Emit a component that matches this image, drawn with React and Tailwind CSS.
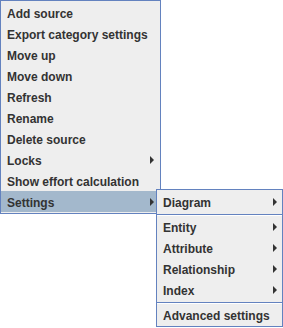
import React from "react";

const Arrow = () => (
  <svg width="4" height="8" viewBox="0 0 4 8" className="block">
    <polygon points="0,0 4,4 0,8" fill="#333333" />
  </svg>
);

const Item = ({ label, arrow, selected, arrowPad = "pr-[6px]" }) => (
  <div
    className={`flex items-center justify-between h-[21px] pl-[6px] ${arrowPad} ${
      selected ? "bg-[#A3B8CC]" : ""
    }`}
  >
    <span className="pt-[3px] leading-[18px] whitespace-nowrap">{label}</span>
    {arrow && <Arrow />}
  </div>
);

const Sep = () => (
  <div className="h-[4px] pt-[2px]">
    <div className="h-px bg-[#6382BF]" />
    <div className="h-px bg-white" />
  </div>
);

export default function App() {
  const main = [
    "Add source",
    "Export category settings",
    "Move up",
    "Move down",
    "Refresh",
    "Rename",
    "Delete source",
  ];
  return (
    <div
      className="relative w-[283px] h-[328px] bg-white text-[12px] font-bold text-[#333333]"
      style={{ fontFamily: '"Liberation Sans", Arial, sans-serif' }}
    >
      <div className="w-[161px] h-[214px] border border-[#6382BF] bg-[#EEEEEE] py-px">
        {main.map((m) => (
          <Item key={m} label={m} />
        ))}
        <Item label="Locks" arrow arrowPad="pr-[6px]" />
        <Item label="Show effort calculation" />
        <Item label="Settings" arrow selected arrowPad="pr-[6px]" />
      </div>
      <div className="absolute left-[156px] top-[189px] w-[127px] h-[138px] border border-[#6382BF] bg-[#EEEEEE] py-px">
        <Item label="Diagram" arrow arrowPad="pr-[5px]" />
        <Sep />
        <Item label="Entity" arrow arrowPad="pr-[5px]" />
        <Item label="Attribute" arrow arrowPad="pr-[5px]" />
        <Item label="Relationship" arrow arrowPad="pr-[5px]" />
        <Item label="Index" arrow arrowPad="pr-[5px]" />
        <Sep />
        <Item label="Advanced settings" />
      </div>
    </div>
  );
}
